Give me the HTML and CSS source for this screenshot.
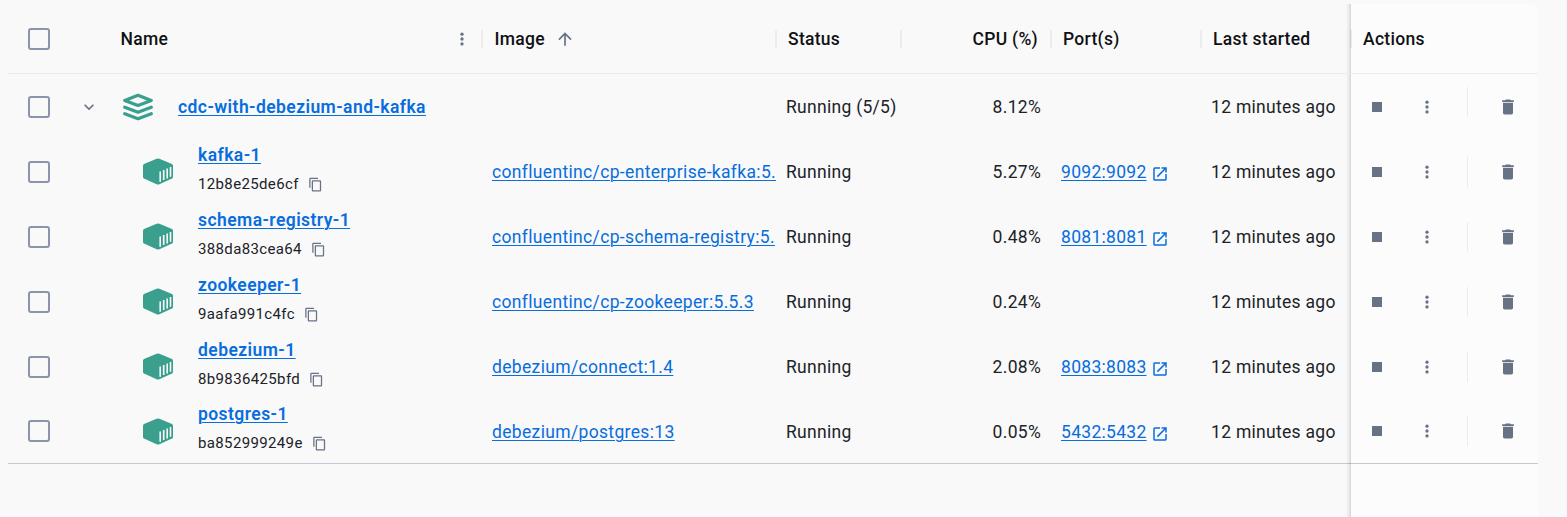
FILE: index.html
```html
<!DOCTYPE html>
<html lang="en">
<head>
<meta charset="utf-8">
<title>Containers</title>
<link rel="stylesheet" href="styles.css">
</head>
<body>
<svg class="sprite" aria-hidden="true">
  <symbol id="dots" viewBox="0 0 24 24"><circle cx="12" cy="5.500" r="2.200"/><circle cx="12" cy="12" r="2.200"/><circle cx="12" cy="18.500" r="2.200"/></symbol>
  <symbol id="arrow" viewBox="0 0 24 24"><path d="M4 12l1.410 1.410L11 7.830V20h2V7.830l5.580 5.590L20 12l-8-8-8 8z"/></symbol>
  <symbol id="chevron" viewBox="0 0 24 24"><path d="M7.410 8.590 12 13.170l4.590-4.580L18 10l-6 6-6-6z"/></symbol>
  <symbol id="stack" viewBox="0 0 30 28"><path d="M15 2.300 28.300 7.400 15 12.500 1.700 7.400z M1.700 14.200 15 19.200 28.300 14.200 M1.700 20.700 15 25.700 28.300 20.700" fill="none" stroke="currentColor" stroke-width="3.200" stroke-linecap="round" stroke-linejoin="round"/></symbol>
  <symbol id="box" viewBox="0 0 30 27"><path d="M13.600.7a4 4 0 0 1 2.800 0L29 6q1 .5 1 1.500V19q0 1-1 1.500L16.400 26.200a4 4 0 0 1-2.800 0L1 20.500Q0 20 0 19V7.500Q0 6.500 1 6z"/><path d="M17.200 13.500v10.200M20.700 12v9.900M24.200 10.400v10M27.500 9v9.700" stroke="#f9f9fa" stroke-width="1.600"/></symbol>
  <symbol id="copy" viewBox="0 0 24 24"><path d="M16 1H4c-1.100 0-2 .9-2 2v14h2V3h12V1zm3 4H8c-1.100 0-2 .9-2 2v14c0 1.100.9 2 2 2h11c1.100 0 2-.9 2-2V7c0-1.100-.9-2-2-2zm0 16H8V7h11v14z"/></symbol>
  <symbol id="open" viewBox="0 0 24 24"><path d="M19 19H5V5h7V3H5a2 2 0 0 0-2 2v14a2 2 0 0 0 2 2h14c1.100 0 2-.9 2-2v-7h-2v7zM14 3v2h3.590l-9.830 9.830 1.410 1.410L19 6.410V10h2V3h-7z"/></symbol>
  <symbol id="trash" viewBox="0 0 24 24"><path d="M6 19c0 1.100.9 2 2 2h8c1.100 0 2-.9 2-2V7H6v12zM19 4h-3.500l-1-1h-5l-1 1H5v2h14V4z"/></symbol>
</svg>
<main class="table">
  <div class="row head">
    <div class="check"><span class="checkbox"></span></div><div></div>
    <div class="cell split">Name<svg class="i-dots"><use href="#dots"/></svg></div>
    <div class="cell sep image-head">Image<svg class="i-arrow"><use href="#arrow"/></svg></div>
    <div class="cell sep">Status</div>
    <div class="cell sep num">CPU (%)</div>
    <div class="cell sep">Port(s)</div>
    <div class="cell sep">Last started</div>
    <div class="cell sep pinned">Actions</div>
  </div>

  <div class="row">
    <div class="check"><span class="checkbox"></span></div>
    <div class="expander"><svg class="i-chevron"><use href="#chevron"/></svg></div>
    <div class="name group"><svg class="i-stack"><use href="#stack"/></svg><a class="title">cdc-with-debezium-and-kafka</a></div>
    <div class="cell"></div><div class="cell">Running (5/5)</div><div class="cell num">8.12%</div><div class="cell"></div><div class="cell">12 minutes ago</div>
    <div class="pinned actions"><span class="stop"></span><svg class="i-dots"><use href="#dots"/></svg><span class="bar bar-first"></span><svg class="i-trash"><use href="#trash"/></svg></div>
  </div>

  <div class="row">
    <div class="check"><span class="checkbox"></span></div><div></div>
    <div class="name"><svg class="i-box"><use href="#box"/></svg><div class="ident"><a class="title">kafka-1</a><span class="id">12b8e25de6cf<svg class="i-copy"><use href="#copy"/></svg></span></div></div>
    <div class="cell"><a class="image">confluentinc/cp-enterprise-kafka:5.</a></div><div class="cell">Running</div><div class="cell num">5.27%</div>
    <div class="cell"><a>9092:9092</a><svg class="i-open"><use href="#open"/></svg></div><div class="cell">12 minutes ago</div>
    <div class="pinned actions"><span class="stop"></span><svg class="i-dots"><use href="#dots"/></svg><span class="bar"></span><svg class="i-trash"><use href="#trash"/></svg></div>
  </div>

  <div class="row">
    <div class="check"><span class="checkbox"></span></div><div></div>
    <div class="name"><svg class="i-box"><use href="#box"/></svg><div class="ident"><a class="title">schema-registry-1</a><span class="id">388da83cea64<svg class="i-copy"><use href="#copy"/></svg></span></div></div>
    <div class="cell"><a class="image">confluentinc/cp-schema-registry:5.</a></div><div class="cell">Running</div><div class="cell num">0.48%</div>
    <div class="cell"><a>8081:8081</a><svg class="i-open"><use href="#open"/></svg></div><div class="cell">12 minutes ago</div>
    <div class="pinned actions"><span class="stop"></span><svg class="i-dots"><use href="#dots"/></svg><span class="bar"></span><svg class="i-trash"><use href="#trash"/></svg></div>
  </div>

  <div class="row">
    <div class="check"><span class="checkbox"></span></div><div></div>
    <div class="name"><svg class="i-box"><use href="#box"/></svg><div class="ident"><a class="title">zookeeper-1</a><span class="id">9aafa991c4fc<svg class="i-copy"><use href="#copy"/></svg></span></div></div>
    <div class="cell"><a class="image">confluentinc/cp-zookeeper:5.5.3</a></div><div class="cell">Running</div><div class="cell num">0.24%</div>
    <div class="cell"></div><div class="cell">12 minutes ago</div>
    <div class="pinned actions"><span class="stop"></span><svg class="i-dots"><use href="#dots"/></svg><span class="bar"></span><svg class="i-trash"><use href="#trash"/></svg></div>
  </div>

  <div class="row">
    <div class="check"><span class="checkbox"></span></div><div></div>
    <div class="name"><svg class="i-box"><use href="#box"/></svg><div class="ident"><a class="title">debezium-1</a><span class="id">8b9836425bfd<svg class="i-copy"><use href="#copy"/></svg></span></div></div>
    <div class="cell"><a class="image">debezium/connect:1.4</a></div><div class="cell">Running</div><div class="cell num">2.08%</div>
    <div class="cell"><a>8083:8083</a><svg class="i-open"><use href="#open"/></svg></div><div class="cell">12 minutes ago</div>
    <div class="pinned actions"><span class="stop"></span><svg class="i-dots"><use href="#dots"/></svg><span class="bar"></span><svg class="i-trash"><use href="#trash"/></svg></div>
  </div>

  <div class="row last">
    <div class="check"><span class="checkbox"></span></div><div></div>
    <div class="name"><svg class="i-box"><use href="#box"/></svg><div class="ident"><a class="title">postgres-1</a><span class="id">ba852999249e<svg class="i-copy"><use href="#copy"/></svg></span></div></div>
    <div class="cell"><a class="image">debezium/postgres:13</a></div><div class="cell">Running</div><div class="cell num">0.05%</div>
    <div class="cell"><a>5432:5432</a><svg class="i-open"><use href="#open"/></svg></div><div class="cell">12 minutes ago</div>
    <div class="pinned actions"><span class="stop"></span><svg class="i-dots"><use href="#dots"/></svg><span class="bar"></span><svg class="i-trash"><use href="#trash"/></svg></div>
  </div>

  <div class="row filler"><div class="pinned"></div></div>
</main>
</body>
</html>
```
FILE: styles.css
```css
* { box-sizing: border-box; }
body {
  margin: 0;
  height: 517px;
  overflow: hidden;
  background: #f9f9fa;
  color: #202227;
  font: 400 17.5px/22px Roboto, sans-serif;
  letter-spacing: 0.29px;
}
svg { display: block; flex: none; fill: currentColor; color: #677285; }
.sprite { position: absolute; width: 0; height: 0; }
a { color: #086ddd; text-decoration: underline; text-underline-offset: 2px; text-decoration-thickness: 1px; }

.table { width: 1530px; height: 517px; margin-left: 8px; padding-top: 4px; display: flex; flex-direction: column; }
.row {
  display: grid;
  flex: none;
  grid-template-columns: 62px 38px 374px 294px 125px 150px 150px 150px 187px;
  height: 65px;
}
.head { height: 70px; border-bottom: 1px solid #ececee; font-weight: 500; color: #101114; }
.last { border-bottom: 1px solid #c4c8d1; }
.filler { flex: 1; }
.filler .pinned { grid-column: 9; }

.check { display: flex; align-items: center; padding-left: 20px; }
.checkbox { width: 22px; height: 22px; border: 2px solid #8c94ab; border-radius: 3px; }
.expander { display: flex; align-items: center; padding-left: 9px; }

.cell { display: flex; align-items: center; padding: 0 10px; white-space: nowrap; min-width: 0; }
.last .cell { padding-top: 2px; }
.head .cell { padding: 0 12px; position: relative; }
.head .split, .head .image-head { padding-left: 12.5px; }
.head .num { padding-right: 13px; }
.split { justify-content: space-between; }
.num { justify-content: flex-end; }
.sep::before { content: ""; position: absolute; left: -1px; top: 26px; width: 2px; height: 18px; background: #ececee; }
.image { margin-right: -10px; letter-spacing: 0.34px; }

.name { display: flex; align-items: center; padding-left: 35px; gap: 25px; }
.group { padding-left: 15px; }
.title { font-weight: 600; letter-spacing: 0.43px; }
.ident { display: flex; flex-direction: column; align-items: flex-start; gap: 8px; padding-bottom: 6px; }
.id { display: flex; align-items: center; gap: 9px; font-size: 15px; line-height: 20px; letter-spacing: 0.36px; }

.pinned { position: relative; background: #fcfcfd; }
.pinned::after {
  content: "";
  position: absolute;
  left: -5px;
  top: 0;
  bottom: 0;
  width: 5px;
  background: linear-gradient(to left, rgba(0, 0, 0, 0.15), rgba(0, 0, 0, 0.05) 50%, transparent);
}
.head .pinned { border-top-right-radius: 5px; }
.actions { display: grid; grid-template-columns: 50px 50px 16px 72px; align-items: center; }
.row:not(.head):not(.last) > * { padding-top: 1px; }
.last .pinned::after { bottom: -1px; }
.stop { width: 10px; height: 10px; margin-left: 21px; background: #677285; }
.actions .i-dots { margin-left: 17px; }
.bar { width: 1px; height: 30px; margin-left: 16px; background: #ececee; align-self: start; margin-top: 17px; }
.bar-first { margin-top: 12px; }

.i-dots { width: 18px; height: 18px; }
.head .split .i-dots { margin-right: -1px; }
.i-arrow { width: 20px; height: 20px; margin-left: 10px; }
.i-chevron { width: 20px; height: 20px; }
.i-stack { width: 30px; height: 28px; color: #3aa08d; }
.i-box { width: 30px; height: 27px; color: #3aa08d; margin-top: -1px; }
.last .i-box { margin-top: 0; }
.i-copy { width: 15px; height: 15px; }
.i-open { width: 18px; height: 18px; margin: 3px 0 0 4px; color: #086ddd; }
.i-trash { width: 20px; height: 20px; margin-left: 31px; }
```
